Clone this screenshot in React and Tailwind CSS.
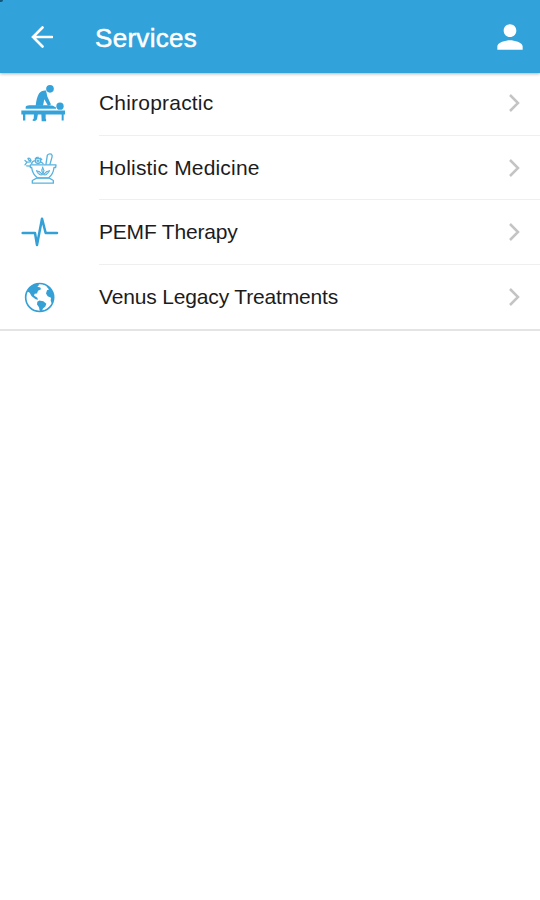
import { MdPerson } from 'react-icons/md'

const MassageIcon = () => (
  <svg viewBox="0 -1.5 210 168" className="w-[70px] h-[56px]" fill="#35a3d9">
    <circle cx="120" cy="37" r="11.500" />
    <path d="M108 42 Q94 41 87 51 Q79 65 77 88 L99 88 L103 68 L114 88 L123 84 L112 60 Z" />
    <path d="M47 97 V91 Q48 86 58 86 H118 Q130 86 138 93 V97 Z" />
    <circle cx="150" cy="89" r="11" />
    <path d="M34 102 H165 V114 H34 Z" />
    <path d="M39 112 H46 V132 H39 Z M155 112 H161 V132 H155 Z" />
    <path d="M72 112 H84 L81 128 Q79 135 68 133 Q67 129 71 127 Z M94 112 H107 V127 Q110 130 108 134 H95 Z" />
  </svg>
)

const MortarIcon = () => (
  <svg
    viewBox="0 -1.5 210 168"
    className="w-[70px] h-[56px]"
    fill="none"
    stroke="#58b3de"
    strokeWidth="4"
    strokeLinejoin="round"
    strokeLinecap="round"
  >
    <path d="M61 73 H138 L137 81 H132 Q130 101 116 112 H82 Q67 100 65 81 H61 Z" />
    <path d="M80 113 H118 L130 120 V128 H67 V120 Z" />
    <path d="M108 71 L112 44 Q117 38 124 41 Q128 44 126 50 L120 71" />
    <path d="M45 60 L51 65 L45 73 M51 65 L62 64 M54 54 Q60 51 63 60 Q57 63 54 54 M65 70 Q66 61 74 61 M50 76 L60 77" />
    <circle cx="84" cy="61" r="8" />
    <path d="M76 55 L80 51 M84 50 V53 M91 53 L95 57 M94 65 L99 69 M84 58 V64 M81 61 H87" />
    <path
      d="M98 80 Q106 90 99 101 Q91 90 98 80 Z M80 91 Q91 90 98 103 Q84 106 80 91 Z M118 91 Q107 90 100 103 Q113 106 118 91 Z"
      fill="#a9d9ef"
      strokeWidth="3"
    />
  </svg>
)

const PulseIcon = () => (
  <svg
    viewBox="0 -3 210 168"
    className="w-[70px] h-[56px]"
    fill="none"
    stroke="#35a0d6"
    strokeWidth="7.500"
    strokeLinejoin="round"
    strokeLinecap="round"
  >
    <path d="M38 84 H75 L81 120 L96 41 L107 84 H141" />
  </svg>
)

const GlobeIcon = () => (
  <svg viewBox="0 1.5 210 168" className="w-[70px] h-[56px]" fill="#35a0d6">
    <circle cx="89" cy="87" r="42" fill="none" stroke="#35a0d6" strokeWidth="5" />
    <path d="M51 68 Q60 49 82 44 L88 49 L82 55 L91 57 L93 62 L84 67 L81 75 L74 76 L72 81 L82 88 L84 94 L77 92 L65 83 L59 73 Z" />
    <path d="M82 100 L88 96 L100 98 L109 106 L106 114 L99 120 L95 129 L89 127 L87 116 L81 108 Z" />
    <path d="M107 49 L119 56 Q130 67 131 87 Q130 101 125 105 L122 96 L123 88 L113 83 L108 75 L111 65 L117 63 L112 57 Z" />
  </svg>
)

const services = [
  { name: 'Chiropractic', Icon: MassageIcon, row: 'h-[63px]', label: 'tracking-[0.2px]' },
  { name: 'Holistic Medicine', Icon: MortarIcon, row: 'h-[64px]', label: 'tracking-[0.18px]' },
  { name: 'PEMF Therapy', Icon: PulseIcon, row: 'h-[65px]', label: 'tracking-[-0.2px]' },
  { name: 'Venus Legacy Treatments', Icon: GlobeIcon, row: 'h-[64px]', label: 'tracking-[-0.16px]' },
]

const Header = () => (
  <header className="relative z-10 h-[73px] bg-[#31a2da] flex items-center text-white shadow-[0_1px_3px_rgba(0,0,0,0.3)]">
    {/* dark edge in the screen corner */}
    <span className="absolute left-0 top-0 w-[3px] h-[2px] rounded-br-full bg-[#12577c]" />
    <svg viewBox="0 0 22 22" className="ml-[31px] mt-px size-[22px]" fill="none">
      <path
        d="M11.500 1.500 L2 11 L11.500 20.500 M2 11 H21"
        stroke="currentColor"
        strokeWidth="2.600"
        strokeLinecap="round"
      />
    </svg>
    <h1 className="ml-[42px] mt-[3px] text-[26px] leading-8 tracking-[0.3px] [-webkit-text-stroke:0.5px_white]">
      Services
    </h1>
    <MdPerson className="ml-auto mr-[11px] size-[38px]" />
  </header>
)

const Chevron = () => (
  <svg viewBox="0 0 12 20" className="w-3 h-5 ml-auto mr-[20px]" fill="none">
    <path d="M2 2 L10 10 L2 18" stroke="#c4c4c4" strokeWidth="2.500" />
  </svg>
)

const App = () => {
  return (
    <div className="w-full h-screen bg-white overflow-hidden font-['Liberation_Sans',Arial,sans-serif]">
      <Header />
      <ul className="border-b-2 border-[#e4e4e4]">
        {services.map(({ name, Icon, row, label }, i) => (
          <li key={name} className={`flex pl-[10px] ${row}`}>
            <div className="w-[89px] shrink-0 flex items-center pb-px">
              <Icon />
            </div>
            <div
              className={`grow flex items-center ${
                i < services.length - 1 ? 'border-b border-[#efefef]' : ''
              } ${i === 0 ? 'pb-[2px]' : ''}`}
            >
              <span className={`text-[21px] leading-7 text-[#1c1c1c] ${label}`}>{name}</span>
              <Chevron />
            </div>
          </li>
        ))}
      </ul>
    </div>
  )
}

export default App
